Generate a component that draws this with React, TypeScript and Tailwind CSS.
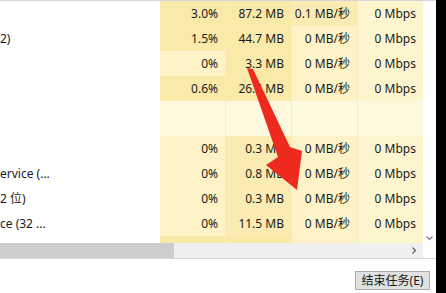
import React from 'react';

type Row = {
  name: string;
  h: string;
  cells: { text: string; bg: string }[];
};

const D = 'bg-[#f9eaa9]';
const M = 'bg-[#f9ebb1]';
const L = 'bg-[#fdf3c6]';
const N = 'bg-[#fdf5cd]';
const B = 'bg-[#fef8df]';

const rows: Row[] = [
  { name: '', h: 'h-[25px]', cells: [{ text: '3.0%', bg: D }, { text: '87.2 MB', bg: D }, { text: '0.1 MB/秒', bg: M }, { text: '0 Mbps', bg: N }] },
  { name: '2)', h: 'h-[25px]', cells: [{ text: '1.5%', bg: D }, { text: '44.7 MB', bg: D }, { text: '0 MB/秒', bg: L }, { text: '0 Mbps', bg: N }] },
  { name: '', h: 'h-[25px]', cells: [{ text: '0%', bg: L }, { text: '3.3 MB', bg: D }, { text: '0 MB/秒', bg: L }, { text: '0 Mbps', bg: N }] },
  { name: '', h: 'h-[25px]', cells: [{ text: '0.6%', bg: D }, { text: '26.5 MB', bg: D }, { text: '0 MB/秒', bg: L }, { text: '0 Mbps', bg: N }] },
  { name: '', h: 'h-[35px]', cells: [{ text: '', bg: B }, { text: '', bg: B }, { text: '', bg: B }, { text: '', bg: B }] },
  { name: '', h: 'h-[25px]', cells: [{ text: '0%', bg: L }, { text: '0.3 MB', bg: M }, { text: '0 MB/秒', bg: L }, { text: '0 Mbps', bg: N }] },
  { name: 'ervice (...', h: 'h-[25px]', cells: [{ text: '0%', bg: L }, { text: '0.8 MB', bg: M }, { text: '0 MB/秒', bg: L }, { text: '0 Mbps', bg: N }] },
  { name: '2 位)', h: 'h-[25px]', cells: [{ text: '0%', bg: L }, { text: '0.3 MB', bg: M }, { text: '0 MB/秒', bg: L }, { text: '0 Mbps', bg: N }] },
  { name: 'ce (32 ...', h: 'h-[25px]', cells: [{ text: '0%', bg: L }, { text: '11.5 MB', bg: M }, { text: '0 MB/秒', bg: L }, { text: '0 Mbps', bg: N }] },
  { name: '', h: 'h-[7px]', cells: [{ text: '', bg: D }, { text: '', bg: D }, { text: '', bg: L }, { text: '', bg: N }] },
];

const widths = ['w-[66px]', 'w-[66px]', 'w-[66px]', 'w-[65px]'];

export default function App() {
  return (
    <div
      className="relative flex h-[293px] w-[446px] overflow-hidden bg-white text-[12px] text-[#1a1a1a]"
      style={{ fontFamily: '"Noto Sans", "Noto Sans CJK SC", sans-serif' }}
    >
      <div className="flex w-[436px] flex-col">
        <div className="h-px bg-[#d6d6d6]" />
        <div className="flex">
          <div className="flex w-[423px] flex-col">
            {rows.map((r, i) => (
              <div key={i} className={`flex ${r.h}`}>
                <div className="flex w-[160px] items-center overflow-hidden whitespace-nowrap bg-white">
                  {r.name}
                </div>
                {r.cells.map((c, j) => (
                  <div
                    key={j}
                    className={`flex items-center justify-end whitespace-nowrap pr-[7px] ${widths[j]} ${c.bg} ${j < 3 ? 'border-r border-[#f4ecd0]' : ''}`}
                  >
                    {c.text}
                  </div>
                ))}
              </div>
            ))}
          </div>
          <div className="flex w-[13px] flex-col justify-end bg-white pb-[1px]">
            <svg width="13" height="8" viewBox="0 0 13 8">
              <path d="M3.5 2.5 L6.5 5.5 L9.5 2.5" fill="none" stroke="#7a7a7a" strokeWidth="1.2" />
            </svg>
          </div>
        </div>
        <div className="flex h-[15px]">
          <div className="flex w-[423px] items-center bg-[#f0f0f0]">
            <div className="h-full w-[174px] bg-[#cdcdcd]" />
            <div className="flex-1" />
            <svg width="8" height="9" viewBox="0 0 8 9" className="mr-[5px]">
              <path d="M2.5 1.5 L5.5 4.5 L2.5 7.5" fill="none" stroke="#606060" strokeWidth="1.2" />
            </svg>
          </div>
          <div className="w-[13px] bg-white" />
        </div>
        <div className="h-px bg-[#d4d4d4]" />
        <div className="flex flex-1 items-start justify-end pr-[6px] pt-[12px]">
          <button className="h-[19px] w-[75px] border border-[#adadad] bg-[#e1e1e1] text-[12px] leading-none text-[#1a1a1a]">
            结束任务(E)
          </button>
        </div>
      </div>
      <div className="w-[10px] bg-black" />
      <svg className="pointer-events-none absolute left-0 top-0" width="446" height="293" viewBox="0 0 446 293">
        <polygon points="247,68 253,69 290,147 302,151 297,190 266,165 278,157" fill="#ee2a1f" />
      </svg>
    </div>
  );
}
